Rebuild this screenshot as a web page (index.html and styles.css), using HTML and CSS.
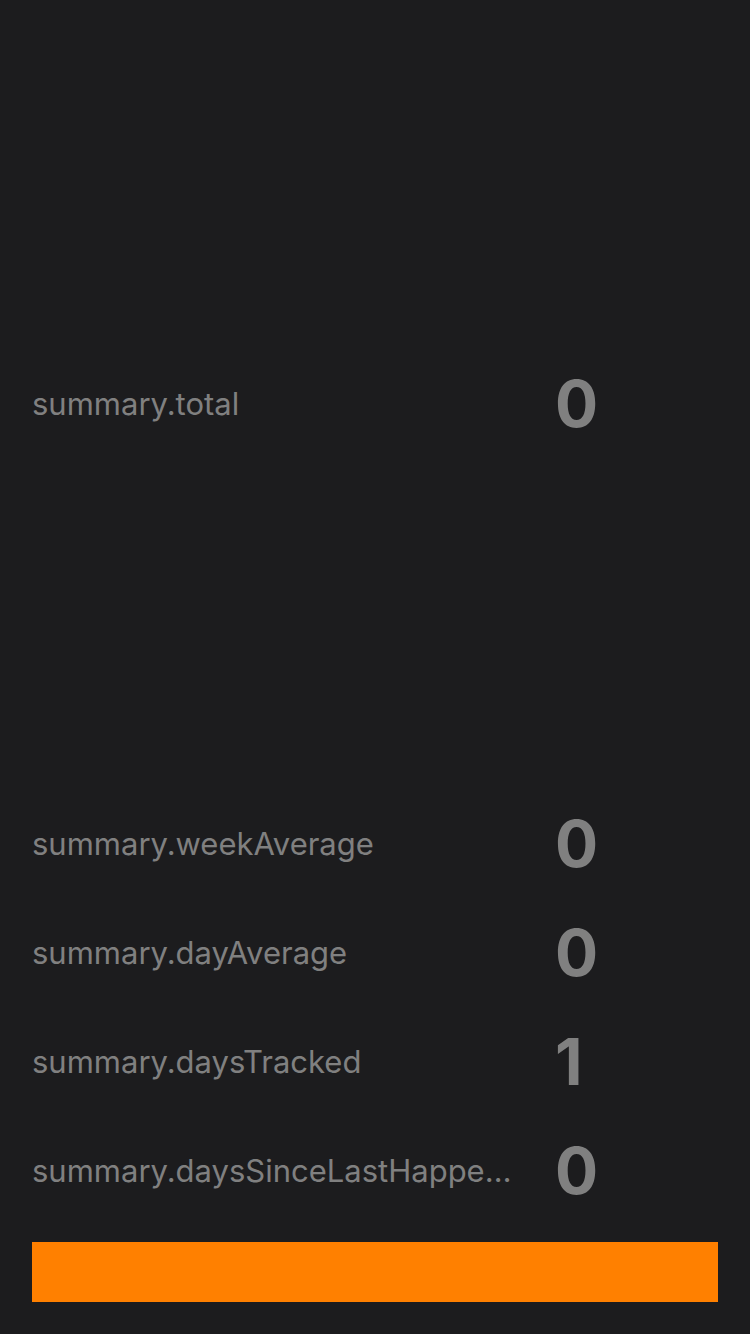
FILE: index.html
```html
<!DOCTYPE html>
<html>
<head>
<meta charset="utf-8">
<link rel="stylesheet" href="styles.css">
</head>
<body>
<div class="screen">
  <div class="top-space"></div>
  <div class="row">
    <div class="label">summary.total</div>
    <div class="value">0</div>
  </div>
  <div class="chart"></div>
  <div class="row">
    <div class="label">summary.weekAverage</div>
    <div class="value">0</div>
  </div>
  <div class="row">
    <div class="label">summary.dayAverage</div>
    <div class="value">0</div>
  </div>
  <div class="row">
    <div class="label">summary.daysTracked</div>
    <div class="value">1</div>
  </div>
  <div class="row">
    <div class="label">summary.daysSinceLastHappened</div>
    <div class="value">0</div>
  </div>
  <div class="button"></div>
</div>
</body>
</html>
```
FILE: styles.css
```css
html, body {
  margin: 0;
  padding: 0;
  background: #1c1c1e;
}
.screen {
  width: 750px;
  height: 1334px;
  box-sizing: border-box;
  padding: 0 32px;
  display: flex;
  flex-direction: column;
  font-family: Inter, "Liberation Sans", sans-serif;
  color: #808080;
}
.top-space {
  height: 349px;
}
.chart {
  height: 331px;
}
.row {
  height: 109px;
  display: flex;
  align-items: center;
  gap: 27px;
}
.label {
  width: 496px;
  font-size: 31px;
  white-space: nowrap;
  overflow: hidden;
  text-overflow: ellipsis;
}
.value {
  font-size: 64px;
  font-weight: 700;
  line-height: 1;
}
.button {
  margin-top: 17px;
  height: 60px;
  background: #ff8000;
}
```
